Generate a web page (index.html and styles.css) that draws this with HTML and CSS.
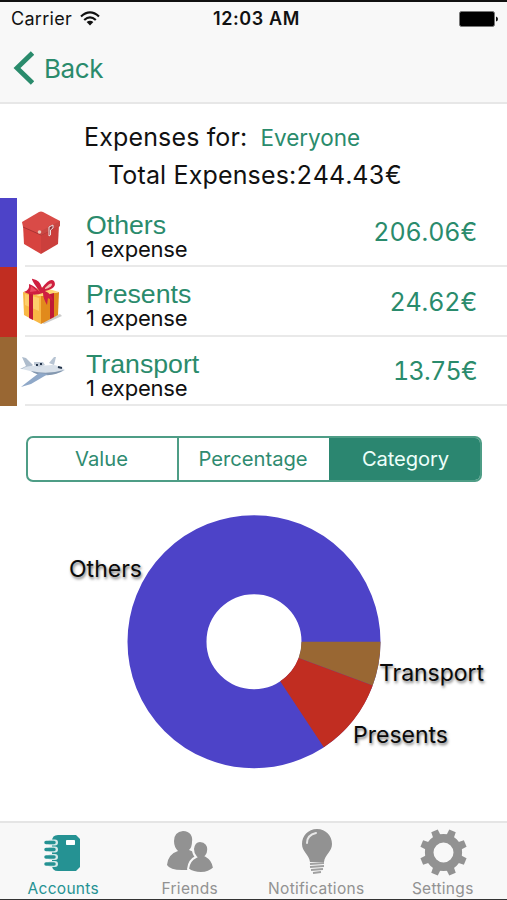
FILE: index.html
```html
<!DOCTYPE html>
<html lang="en">
<head>
<meta charset="utf-8">
<title>Expenses</title>
<link rel="stylesheet" href="styles.css">
</head>
<body>
<div class="app">
  <header class="top">
    <div class="status">
      <span class="carrier">Carrier</span>
      <svg class="wifi" width="20" height="16" viewBox="0 0 20 16"><g fill="none" stroke="#111" stroke-width="2.200"><path d="M1 5.500Q10-2.700 19 5.500"/><path d="M4.200 9Q10 3.600 15.800 9"/></g><path d="M6.600 11Q10 8.300 13.400 11L10 14.600Z" fill="#111"/></svg>
      <span class="clock">12:03 AM</span>
      <svg class="battery" width="40" height="16" viewBox="0 0 40 16"><rect x=".5" y=".5" width="35" height="15" rx="2" fill="#000" stroke="#777"/><path d="M37 5.500q2 .5 2 2.500t-2 2.500z" fill="#111"/></svg>
    </div>
    <div class="nav">
      <svg class="chevron" width="22" height="34" viewBox="0 0 22 34"><path d="M20.500 2L5 17L20.500 32" fill="none" stroke="#2a8b6c" stroke-width="4.800"/></svg>
      <span class="back">Back</span>
    </div>
  </header>

  <main>
    <div class="filter"><span class="filter-label">Expenses for:</span><span class="filter-value">Everyone</span></div>
    <div class="total">Total Expenses:<span class="sum">244.43€</span></div>

    <ul class="list">
      <li class="row">
        <i class="bar others"></i>
        <div class="cell">
          <svg class="pic" width="50" height="50" viewBox="0 0 50 50">
            <path d="M4 17L22 27V46L5 36Z" fill="#d7433f"/>
            <path d="M22 27L40 17L39 36L22 46Z" fill="#cb3f3c"/>
            <path d="M3 14L20 4Q22 3 24 4L41 13V18L22 27L4 19Z" fill="#d94b47"/>
            <path d="M4 19L22 27L40 18" fill="none" stroke="#a93434"/>
            <path d="M22 23L41 13V18L22 27Z" fill="#c94743"/>
            <circle cx="20.500" cy="24" r="1.800" fill="#e8c6b9"/>
            <path d="M30 19L34 17V20L31.500 22V27L30 28Z" fill="#8e2f36" stroke="#eadede"/>
          </svg>
          <div class="info"><span class="name">Others</span><span class="count">1 expense</span></div>
          <span class="amount">206.06€</span>
        </div>
      </li>
      <li class="row">
        <i class="bar presents"></i>
        <div class="cell">
          <svg class="pic" width="50" height="50" viewBox="0 0 50 50">
            <path d="M22 45L41 37L43 39L25 47Z" fill="#ccc"/>
            <path d="M4 15L22 19V47L5 38Z" fill="#f8b845"/><path d="M22 19L40 15L39 38L22 47Z" fill="#e18a1c"/>
            <path d="M4 15L23 10L40 15L22 19Z" fill="#ffd873"/>
            <path d="M6 17L20 21V34L6 28Z" fill="#ffda80" opacity=".65"/>
            <path d="M10 16L14 17V43L10 41ZM31 17L35 16V40L31 42Z" fill="#bf1936"/>
            <path d="M21 15Q10 0 14 2Q21 3 23 11Q31 0 35 4Q39 11 26 14Q33 17 34 24L29 21L28 28Q24 21 24 16Q14 20 5 15Q11 13 10 7Q16 9 21 15Z" fill="#cf1f40"/>
            <path d="M26 11Q33 4 33 8Q31 11 26 12Z" fill="#f3c2b5"/><path d="M12 9L18 14L11 15Z" fill="#e94b62"/>
          </svg>
          <div class="info"><span class="name">Presents</span><span class="count">1 expense</span></div>
          <span class="amount">24.62€</span>
        </div>
      </li>
      <li class="row">
        <i class="bar transport"></i>
        <div class="cell">
          <svg class="pic" width="50" height="50" viewBox="0 0 50 50">
            <path d="M30 16L35 10L37 10L35 18Z" fill="#b7c4d3"/>
            <path d="M3 10L7 11L14 18L9 22L1 22L7 19Z" fill="#aebccc"/>
            <path d="M3 22Q9 18 19 19L33 18Q40 18 46 23Q42 26 35 26Q20 28 11 24Z" fill="#d9e1ea"/>
            <path d="M12 24Q28 28 45 23Q37 29 25 28Q17 28 12 24Z" fill="#8498b0"/>
            <path d="M20 26L29 27L12 37L2 40L7 36Z" fill="#8fa8c8"/>
            <path d="M15 15L24 15L26 18L20 20L15 18Z" fill="#c1cbd7"/>
            <path d="M17 18h2M21 17h2M39 20l4 1" stroke="#25364d" stroke-width="2"/>
          </svg>
          <div class="info"><span class="name">Transport</span><span class="count">1 expense</span></div>
          <span class="amount amount-narrow">13.75€</span>
        </div>
      </li>
    </ul>

    <div class="segments">
      <span class="segment">Value</span><span class="segment">Percentage</span><span class="segment active">Category</span>
    </div>

    <svg class="chart" width="507" height="300" viewBox="0 500 507 300">
      <circle cx="254" cy="641.700" r="87" fill="none" stroke="#4d43c8" stroke-width="79"/>
      <path d="M301.500 641.700H380.500A126.500 126.500 0 0 1 372.700 685.500L298.600 658.100A47.500 47.500 0 0 0 301.500 641.700Z" fill="#996733"/>
      <path d="M298.600 658.100L372.700 685.500A126.500 126.500 0 0 1 323.800 747.200L280.200 681.300A47.500 47.500 0 0 0 298.600 658.100Z" fill="#c12d21"/>
      <g class="labels">
        <text x="69" y="577" textLength="73">Others</text>
        <text x="379" y="681" textLength="105">Transport</text>
        <text x="353" y="743" textLength="95">Presents</text>
      </g>
    </svg>
  </main>

  <footer class="tabs">
    <div class="tab selected">
      <svg width="48" height="50" viewBox="0 0 48 50"><path d="M19 8H37L41 12V40L37 44H19Q13 44 13 38V14Q13 8 19 8Z" fill="#259293"/><rect x="27" y="13" width="9" height="5" rx=".8" fill="#fff"/><g stroke="#d5e9e9" stroke-width="6" stroke-linecap="round"><path d="M12 15.500h4M12 22.500h4M12 30h4M12 37h4"/></g><g stroke="#259293" stroke-width="3.500" stroke-linecap="round"><path d="M7 15.500h8M7 22.500h8M7 30h8M7 37h8"/></g></svg>
      <span>Accounts</span>
    </div>
    <div class="tab">
      <svg width="48" height="50" viewBox="0 0 48 50"><g fill="#929292"><path d="M17 4C24 4 27 9 26 15Q26 20 23 23Q31 25 33 34V43H16Q4 43 1 38Q2 27 12 24Q8 20 8 14Q8 5 17 4Z"/><path stroke="#f8f8f8" stroke-width="2" d="M34 14C40 14 43 19 42 24Q42 27 40 29Q47 33 48 41Q43 46 35 46Q27 46 22 42Q23 33 30 30Q27 27 27 22Q28 14 34 14Z"/></g></svg>
      <span>Friends</span>
    </div>
    <div class="tab">
      <svg width="48" height="50" viewBox="0 0 48 50"><path d="M25 2C34 2 40 9 40 17C40 25 33 27 32 35H18C17 27 10 25 10 17C10 9 16 2 25 2Z" fill="#929292"/><path d="M15 16Q15 8 24 6" fill="none" stroke="#e8e8e8" stroke-width="2" stroke-linecap="round"/><path d="M18 37L32 36M18 40L32 39M19 43L31 42M21 46L29 45" stroke="#a0a0a0" stroke-width="2"/></svg>
      <span>Notifications</span>
    </div>
    <div class="tab">
      <svg width="48" height="50" viewBox="0 0 48 50"><defs><path id="tooth" d="M20 9L20.500 2H27.500L28 9Z"/></defs><g fill="#929292"><circle cx="24.500" cy="25.500" r="14.300" fill="none" stroke="#929292" stroke-width="8.600"/><g transform="translate(.5 0)"><use href="#tooth" transform="rotate(22.500 24 25.500)"/><use href="#tooth" transform="rotate(67.500 24 25.500)"/><use href="#tooth" transform="rotate(112.500 24 25.500)"/><use href="#tooth" transform="rotate(157.500 24 25.500)"/><use href="#tooth" transform="rotate(202.500 24 25.500)"/><use href="#tooth" transform="rotate(247.500 24 25.500)"/><use href="#tooth" transform="rotate(292.500 24 25.500)"/><use href="#tooth" transform="rotate(337.500 24 25.500)"/></g></g></svg>
      <span>Settings</span>
    </div>
  </footer>
</div>
</body>
</html>
```
FILE: styles.css
```css
* { box-sizing: border-box; }
body { margin: 0; background: #fff; font-family: Inter, "Liberation Sans", sans-serif; color: #111; }
svg { display: block; flex: none; }
span { white-space: nowrap; }
.app { width: 507px; height: 900px; display: flex; flex-direction: column; overflow: hidden; border-top: 2px solid #111; border-bottom: 1px solid #333; }
.top { height: 102px; background: #f8f8f8; border-bottom: 2px solid #e7e7e7; }
.status { height: 32px; display: grid; grid-template-columns: 69px 130px 1fr 40px; padding: 0 8px 0 11px; align-items: center; font-size: 18px; line-height: 34px; }
.carrier { letter-spacing: .3px; }
.wifi { margin-top: -1px; }
.clock { font-weight: 600; margin-left: 3px; letter-spacing: .6px; }
.nav { height: 68px; display: flex; align-items: center; padding-left: 12px; gap: 10px; color: #2a8b6c; }
.back { font-size: 26px; letter-spacing: -.4px; }
main { height: 717px; }
.filter { display: flex; align-items: baseline; height: 37px; padding: 15px 0 0 84px; gap: 13px; line-height: 36px; }
.filter-label { font-size: 25px; letter-spacing: .15px; }
.filter-value { font-size: 22.500px; color: #2a8b6c; letter-spacing: 0; }
.total { height: 56.500px; padding: 16px 0 0 108px; font-size: 25px; line-height: 36px; letter-spacing: .15px; white-space: nowrap; }
.sum, .amount { font-feature-settings: "tnum"; }
.list { margin: 0; padding: 0; list-style: none; }
.row { height: 69.500px; display: flex; gap: 8px; }
.bar { width: 17px; }
.others { background: #4d43c8; }
.presents { background: #c12d21; }
.transport { background: #996733; }
.cell { flex: 1; display: flex; align-items: center; border-bottom: 2px solid #e9e9e9; padding-right: 30px; }
.pic { margin: 3px 0 0 -6px; }
.info { display: flex; flex-direction: column; margin: 9px 0 0 17px; flex: 1; }
.name { font-family: "Liberation Sans", sans-serif; font-size: 26.700px; line-height: 26px; color: #2a8b6c; }
.count { font-size: 22px; line-height: 22px; letter-spacing: -.2px; }
.amount { font-size: 25px; color: #2a8b6c; letter-spacing: -.1px; padding-top: 2px; }
.amount-narrow { letter-spacing: -.7px; }
.segments { height: 46px; margin: 29.500px 25px 0 26px; display: grid; grid-template-columns: 149px 152px 1fr; border: 2px solid #4e9d86; border-radius: 7px; overflow: hidden; color: #2f8b70; }
.segment { display: flex; align-items: center; justify-content: center; padding-right: 2px; font-size: 20.200px; }
.segment + .segment { border-left: 2px solid #4e9d86; }
.segment.active { background: #2b8670; color: #edfffa; border-color: #2b8670; padding-right: 0; letter-spacing: -.1px; }
.chart { margin-top: 18px; }
.labels { font-size: 23px; fill: #0a0a0a; text-shadow: 1px 2px 3px rgba(0, 0, 0, .55); }
.tabs { height: 78px; display: grid; grid-template-columns: repeat(4, 126.500px); background: #f8f8f8; border-top: 2px solid #e5e5e5; color: #929292; }
.tab { display: flex; flex-direction: column; align-items: center; padding-top: 4px; font-size: 15.500px; line-height: 19px; letter-spacing: .3px; }
.tab svg { margin-bottom: 2px; }
.selected { color: #259293; }
```
